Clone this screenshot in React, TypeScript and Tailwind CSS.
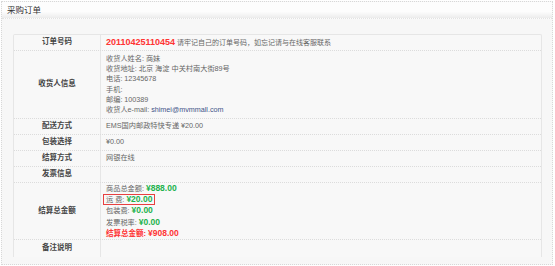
function Row({
  label,
  h,
  last,
  children,
}: {
  label: string;
  h: string;
  last?: boolean;
  children?: React.ReactNode;
}) {
  return (
    <div
      className={`flex ${h} ${
        last ? "" : "border-b border-dotted border-[#dcdcdc]"
      }`}
    >
      <div className="w-[87px] shrink-0 flex items-center justify-center border-r border-[#e6e6e6] font-bold text-[7.5px] text-[#444]">
        {label}
      </div>
      <div className="flex-1 flex flex-col justify-center pl-[5px] text-[7.2px] text-[#666]">
        {children}
      </div>
    </div>
  );
}

export default function App() {
  return (
    <div
      className="w-[555px] h-[266px] bg-white overflow-hidden"
      style={{ fontFamily: '"Liberation Sans", "Noto Sans CJK SC", sans-serif' }}
    >
      <div className="ml-[1px] mt-[1px] w-[552px] h-[264px] border border-dotted border-[#d8d8d8] bg-[#f7f7f7]">
        <div className="h-[17px] bg-[linear-gradient(#fdfdfd,#fdfdfd_60%,#ececec)] border-b border-dotted border-[#e2e2e2] px-[5px] pt-[3px] text-[8.5px] leading-[11px] text-[#333]">
          采购订单
        </div>
        <div className="mt-[15px] ml-[11px] w-[529px] border-x border-t border-[#e6e6e6] rounded-t-[2px] bg-[#f8f8f8] leading-[10.2px]">
          <Row label="订单号码" h="h-[16px]">
            <div>
              <span className="font-bold text-[9px] text-[#f33]">20110425110454</span>{" "}
              <span className="text-[7px]">请牢记自己的订单号码，如忘记请与在线客服联系</span>
            </div>
          </Row>
          <Row label="收货人信息" h="h-[68px]">
            <div>收货人姓名: 商妹</div>
            <div>收货地址: 北京 海淀 中关村南大街89号</div>
            <div>电话: 12345678</div>
            <div>手机:</div>
            <div>邮编: 100389</div>
            <div>
              收货人e-mail: <span className="text-[#3f5588]">shimei@mvmmall.com</span>
            </div>
          </Row>
          <Row label="配送方式" h="h-[16px]">
            <div>EMS国内邮政特快专递 ¥20.00</div>
          </Row>
          <Row label="包装选择" h="h-[16px]">
            <div>¥0.00</div>
          </Row>
          <Row label="结算方式" h="h-[16px]">
            <div>网银在线</div>
          </Row>
          <Row label="发票信息" h="h-[16px]" />
          <Row label="结算总金额" h="h-[57px]">
            <div>
              商品总金额: <span className="font-bold text-[8.5px] text-[#22b24c]">¥888.00</span>
            </div>
            <div>
              <span className="inline-block -ml-[3px] px-[2px] border border-[#e84040] leading-[9px]">
                运 费: <span className="font-bold text-[8.5px] text-[#22b24c]">¥20.00</span>
              </span>
            </div>
            <div>
              包装费: <span className="font-bold text-[8.5px] text-[#22b24c]">¥0.00</span>
            </div>
            <div>
              发票税率: <span className="font-bold text-[8.5px] text-[#22b24c]">¥0.00</span>
            </div>
            <div className="font-bold text-[7.5px] text-[#f33]">
              结算总金额: <span className="text-[8.5px]">¥908.00</span>
            </div>
          </Row>
          <Row label="备注说明" h="h-[17px]" last />
        </div>
      </div>
    </div>
  );
}
